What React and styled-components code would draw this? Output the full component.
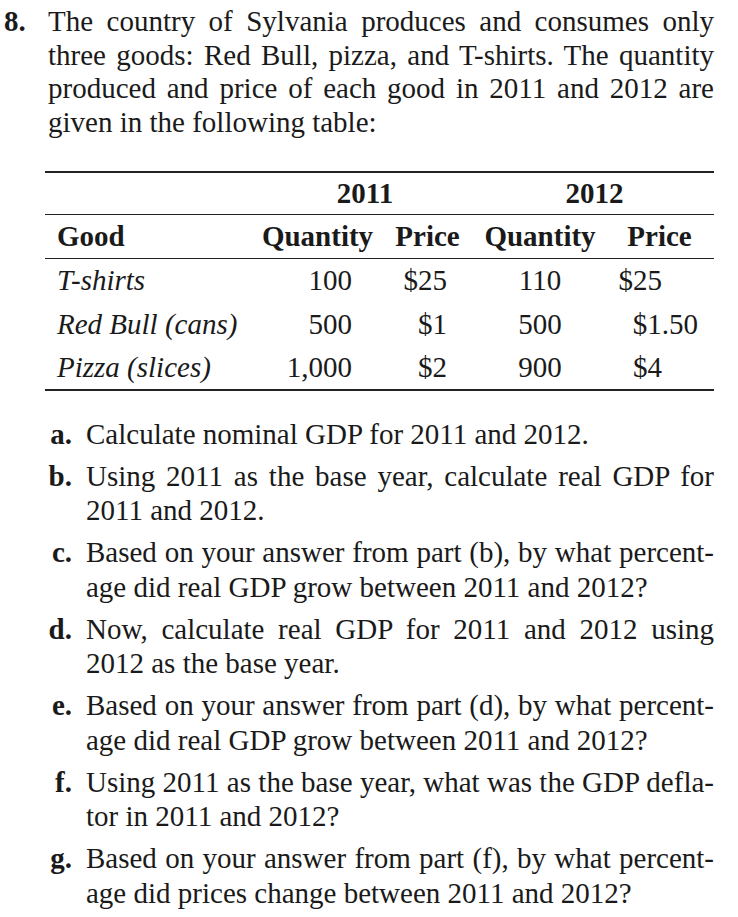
import React from "react";
import styled, { createGlobalStyle } from "styled-components";

const Global = createGlobalStyle`
  html, body { margin: 0; padding: 0; background: #ffffff; }
  body { font-family: "Liberation Serif", "Times New Roman", serif; color: #1a1a1a; }
`;

const Page = styled.div`
  width: 738px;
  box-sizing: border-box;
  padding: 5px 24px 0 4px;
  font-size: 29px;
`;

const Problem = styled.div`
  display: grid;
  grid-template-columns: 44px 1fr;
  line-height: 33.7px;
`;

const Num = styled.div`
  font-weight: bold;
`;

const Line = styled.span`
  display: block;
  word-spacing: ${(p) => (p.$last ? "0" : "-2px")};
  text-align: justify;
  text-align-last: ${(p) => (p.$last ? "left" : "justify")};
`;

const Table = styled.table`
  margin: 31px 0 0 41px;
  width: 669px;
  border-collapse: collapse;
  table-layout: fixed;
  font-size: 29px;
`;

const HeadRow = styled.tr`
  height: ${(p) => p.$h}px;
  border-top: ${(p) => (p.$top ? "2px" : "1.5px")} solid #222;
`;

const BodyRow = styled.tr`
  height: 43.6px;
  border-bottom: ${(p) => (p.$bottom ? "2px solid #222" : "none")};
  &:first-child {
    border-top: 1.5px solid #222;
  }
`;

const Th = styled.th`
  font-weight: bold;
  text-align: ${(p) => p.$align || "center"};
  padding: 0 0 0 ${(p) => (p.$align === "left" ? 12 : 0)}px;
  vertical-align: middle;
`;

const Td = styled.td`
  padding: 0 ${(p) => p.$pr || 0}px 0 ${(p) => p.$pl || 0}px;
  text-align: ${(p) => p.$align || "right"};
  font-style: ${(p) => (p.$italic ? "italic" : "normal")};
  vertical-align: middle;
  white-space: nowrap;
`;

const Items = styled.ol`
  list-style: none;
  margin: 26px 0 0 41px;
  padding: 0;
  display: flex;
  flex-direction: column;
  gap: 7.5px;
`;

const Item = styled.li`
  display: grid;
  grid-template-columns: 27px 1fr;
  column-gap: 14px;
  line-height: 34.5px;
`;

const Label = styled.span`
  font-weight: bold;
  text-align: right;
`;

const rows = [
  { good: "T-shirts", q1: "100", p1: "$25", q2: "110", p2: "$25", dec: false },
  { good: "Red Bull (cans)", q1: "500", p1: "$1", q2: "500", p2: "$1.50", dec: true },
  { good: "Pizza (slices)", q1: "1,000", p1: "$2", q2: "900", p2: "$4", dec: false },
];

const items = [
  ["a.", ["Calculate nominal GDP for 2011 and 2012."]],
  ["b.", ["Using 2011 as the base year, calculate real GDP for", "2011 and 2012."]],
  ["c.", ["Based on your answer from part (b), by what percent-", "age did real GDP grow between 2011 and 2012?"]],
  ["d.", ["Now, calculate real GDP for 2011 and 2012 using", "2012 as the base year."]],
  ["e.", ["Based on your answer from part (d), by what percent-", "age did real GDP grow between 2011 and 2012?"]],
  ["f.", ["Using 2011 as the base year, what was the GDP defla-", "tor in 2011 and 2012?"]],
  ["g.", ["Based on your answer from part (f), by what percent-", "age did prices change between 2011 and 2012?"]],
];

const intro = [
  "The country of Sylvania produces and consumes only",
  "three goods: Red Bull, pizza, and T-shirts. The quantity",
  "produced and price of each good in 2011 and 2012 are",
  "given in the following table:",
];

export default function App() {
  return (
    <>
      <Global />
      <Page>
        <Problem>
          <Num>8.</Num>
          <div>
            {intro.map((t, i) => (
              <Line key={i} $last={i === intro.length - 1}>
                {t}
              </Line>
            ))}
          </div>
        </Problem>

        <Table>
          <colgroup>
            <col style={{ width: 210 }} />
            <col style={{ width: 125 }} />
            <col style={{ width: 95 }} />
            <col style={{ width: 130 }} />
            <col style={{ width: 109 }} />
          </colgroup>
          <thead>
            <HeadRow $h={43} $top>
              <Th />
              <Th colSpan={2}>2011</Th>
              <Th colSpan={2}>2012</Th>
            </HeadRow>
            <HeadRow $h={44}>
              <Th $align="left">Good</Th>
              <Th>Quantity</Th>
              <Th>Price</Th>
              <Th>Quantity</Th>
              <Th>Price</Th>
            </HeadRow>
          </thead>
          <tbody>
            {rows.map((r, i) => (
              <BodyRow key={r.good} $bottom={i === rows.length - 1}>
                <Td $align="left" $pl={12} $italic>
                  {r.good}
                </Td>
                <Td $pr={28}>{r.q1}</Td>
                <Td $pr={28}>{r.p1}</Td>
                <Td $align="center">{r.q2}</Td>
                <Td $pr={r.dec ? 16 : 52}>{r.p2}</Td>
              </BodyRow>
            ))}
          </tbody>
        </Table>

        <Items>
          {items.map(([label, lines]) => (
            <Item key={label}>
              <Label>{label}</Label>
              <div>
                {lines.map((t, i) => (
                  <Line key={i} $last={i === lines.length - 1}>
                    {t}
                  </Line>
                ))}
              </div>
            </Item>
          ))}
        </Items>
      </Page>
    </>
  );
}
